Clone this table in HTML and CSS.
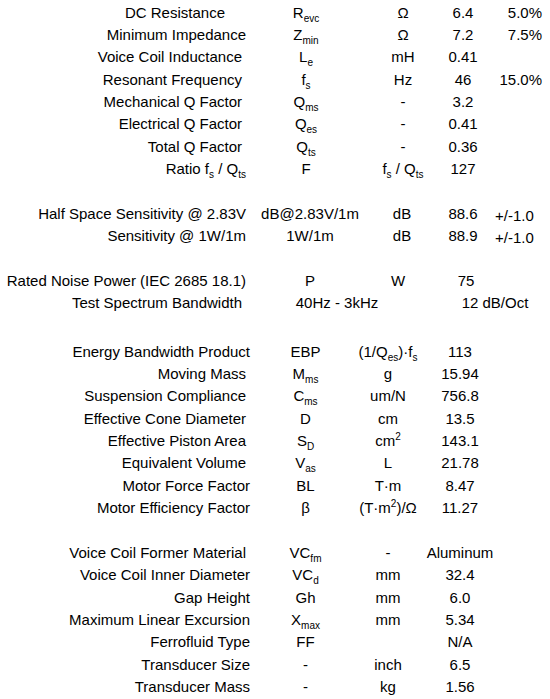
FILE: index.html
```html
<!DOCTYPE html>
<html lang="en">
<head>
    <meta charset="UTF-8">
    <meta name="viewport" content="width=device-width, initial-scale=1.0">
    <title>Transducer Parameters</title>
    <link rel="stylesheet" href="styles.css">
</head>
<body>
    <div class="sheet">
        <!-- Parameter kecil (small signal) -->
        <section class="block block-ts">
            <div class="row"><span class="label dc">DC Resistance</span><span class="sym">R<sub>evc</sub></span><span class="unit">&Omega;</span><span class="val">6.4</span><span class="tol">5.0%</span></div>
            <div class="row"><span class="label">Minimum Impedance</span><span class="sym">Z<sub>min</sub></span><span class="unit">&Omega;</span><span class="val">7.2</span><span class="tol">7.5%</span></div>
            <div class="row"><span class="label in4">Voice Coil Inductance</span><span class="sym">L<sub>e</sub></span><span class="unit">mH</span><span class="val">0.41</span><span class="tol"></span></div>
            <div class="row"><span class="label in4">Resonant Frequency</span><span class="sym">f<sub>s</sub></span><span class="unit">Hz</span><span class="val">46</span><span class="tol">15.0%</span></div>
            <div class="row"><span class="label in4">Mechanical Q Factor</span><span class="sym">Q<sub>ms</sub></span><span class="unit">-</span><span class="val">3.2</span><span class="tol"></span></div>
            <div class="row"><span class="label in4">Electrical Q Factor</span><span class="sym">Q<sub>es</sub></span><span class="unit">-</span><span class="val">0.41</span><span class="tol"></span></div>
            <div class="row"><span class="label in4">Total Q Factor</span><span class="sym">Q<sub>ts</sub></span><span class="unit">-</span><span class="val">0.36</span><span class="tol"></span></div>
            <div class="row"><span class="label">Ratio f<sub>s</sub> / Q<sub>ts</sub></span><span class="sym">F</span><span class="unit">f<sub>s</sub> / Q<sub>ts</sub></span><span class="val">127</span><span class="tol"></span></div>
        </section>

        <!-- Sensitivitas -->
        <section class="block block-spl">
            <div class="row"><span class="label">Half Space Sensitivity @ 2.83V</span><span class="sym">dB@2.83V/1m</span><span class="unit">dB</span><span class="val">88.6</span><span class="tol">+/-1.0</span></div>
            <div class="row"><span class="label">Sensitivity @ 1W/1m</span><span class="sym">1W/1m</span><span class="unit">dB</span><span class="val">88.9</span><span class="tol">+/-1.0</span></div>
        </section>

        <!-- Daya -->
        <section class="block block-pwr">
            <div class="row"><span class="label">Rated Noise Power (IEC 2685 18.1)</span><span class="sym">P</span><span class="unit">W</span><span class="val">75</span><span class="tol"></span></div>
            <div class="row"><span class="label in4">Test Spectrum Bandwidth</span><span class="band">40Hz - 3kHz</span><span class="slope">12 dB/Oct</span></div>
        </section>

        <!-- Parameter mekanik -->
        <section class="block block-mech">
            <div class="row"><span class="label out4">Energy Bandwidth Product</span><span class="sym">EBP</span><span class="unit">(1/Q<sub>es</sub>)&middot;f<sub>s</sub></span><span class="val">113</span></div>
            <div class="row"><span class="label">Moving Mass</span><span class="sym">M<sub>ms</sub></span><span class="unit">g</span><span class="val">15.94</span></div>
            <div class="row"><span class="label">Suspension Compliance</span><span class="sym">C<sub>ms</sub></span><span class="unit">um/N</span><span class="val">756.8</span></div>
            <div class="row"><span class="label">Effective Cone Diameter</span><span class="sym">D</span><span class="unit">cm</span><span class="val">13.5</span></div>
            <div class="row"><span class="label">Effective Piston Area</span><span class="sym">S<sub>D</sub></span><span class="unit">cm<sup>2</sup></span><span class="val">143.1</span></div>
            <div class="row"><span class="label">Equivalent Volume</span><span class="sym">V<sub>as</sub></span><span class="unit">L</span><span class="val">21.78</span></div>
            <div class="row"><span class="label out4">Motor Force Factor</span><span class="sym">BL</span><span class="unit">T&middot;m</span><span class="val">8.47</span></div>
            <div class="row"><span class="label out4">Motor Efficiency Factor</span><span class="sym">&beta;</span><span class="unit">(T&middot;m<sup>2</sup>)/&Omega;</span><span class="val">11.27</span></div>
        </section>

        <!-- Konstruksi -->
        <section class="block block-mech block-build">
            <div class="row"><span class="label">Voice Coil Former Material</span><span class="sym">VC<sub>fm</sub></span><span class="unit">-</span><span class="val">Aluminum</span></div>
            <div class="row"><span class="label out4">Voice Coil Inner Diameter</span><span class="sym">VC<sub>d</sub></span><span class="unit">mm</span><span class="val">32.4</span></div>
            <div class="row"><span class="label out4">Gap Height</span><span class="sym">Gh</span><span class="unit">mm</span><span class="val">6.0</span></div>
            <div class="row"><span class="label out4">Maximum Linear Excursion</span><span class="sym">X<sub>max</sub></span><span class="unit">mm</span><span class="val">5.34</span></div>
            <div class="row"><span class="label out4">Ferrofluid Type</span><span class="sym">FF</span><span class="unit"></span><span class="val">N/A</span></div>
            <div class="row"><span class="label out4">Transducer Size</span><span class="sym">-</span><span class="unit">inch</span><span class="val">6.5</span></div>
            <div class="row"><span class="label out4">Transducer Mass</span><span class="sym">-</span><span class="unit">kg</span><span class="val">1.56</span></div>
        </section>
    </div>
</body>
</html>
```

FILE: styles.css
```css
body {
    margin: 0;
    background-color: #fff;
    color: #000;
    font-family: "Liberation Sans", Arial, sans-serif;
    font-size: 15px;
}

.sheet {
    width: 550px;
    padding-top: 1px;
}

.block {
    margin-top: 22.4px;
}

.block-ts {
    margin-top: 0;
}

.block-mech {
    margin-top: 26px;
}

.block-build {
    margin-top: 22.5px;
}

/* Baris tabel */
.row {
    display: grid;
    height: 22.35px;
    align-items: center;
    white-space: nowrap;
}

.block-ts .row {
    grid-template-columns: 255px 102px 73px 66px 46px;
}

.block-spl .row {
    grid-template-columns: 255px 110px 74px 48px 63px;
}

.block-pwr .row {
    grid-template-columns: 255px 110px 66px 70px 49px;
}

.block-mech .row {
    grid-template-columns: 255px 101px 64px 80px;
}

.label {
    text-align: right;
    padding-right: 9px;
}

.label.in4 {
    padding-right: 13px;
}

.label.out4 {
    padding-right: 5px;
}

.label.dc {
    padding-right: 30px;
}

.sym,
.unit,
.val {
    text-align: center;
}

.block-ts .unit {
    padding-left: 19px;
}

.block-ts .tol {
    text-align: right;
}

.block-spl .tol {
    text-align: left;
    padding-left: 8px;
    padding-top: 4px;
}

.band {
    grid-column: 2 / 4;
    text-align: center;
    padding-right: 12px;
}

.slope {
    grid-column: 4 / 6;
    text-align: center;
    padding-left: 9px;
}

sub {
    font-size: 10px;
    line-height: 0;
    vertical-align: -3.5px;
}

sup {
    font-size: 10px;
    line-height: 0;
    vertical-align: 6px;
}
```
